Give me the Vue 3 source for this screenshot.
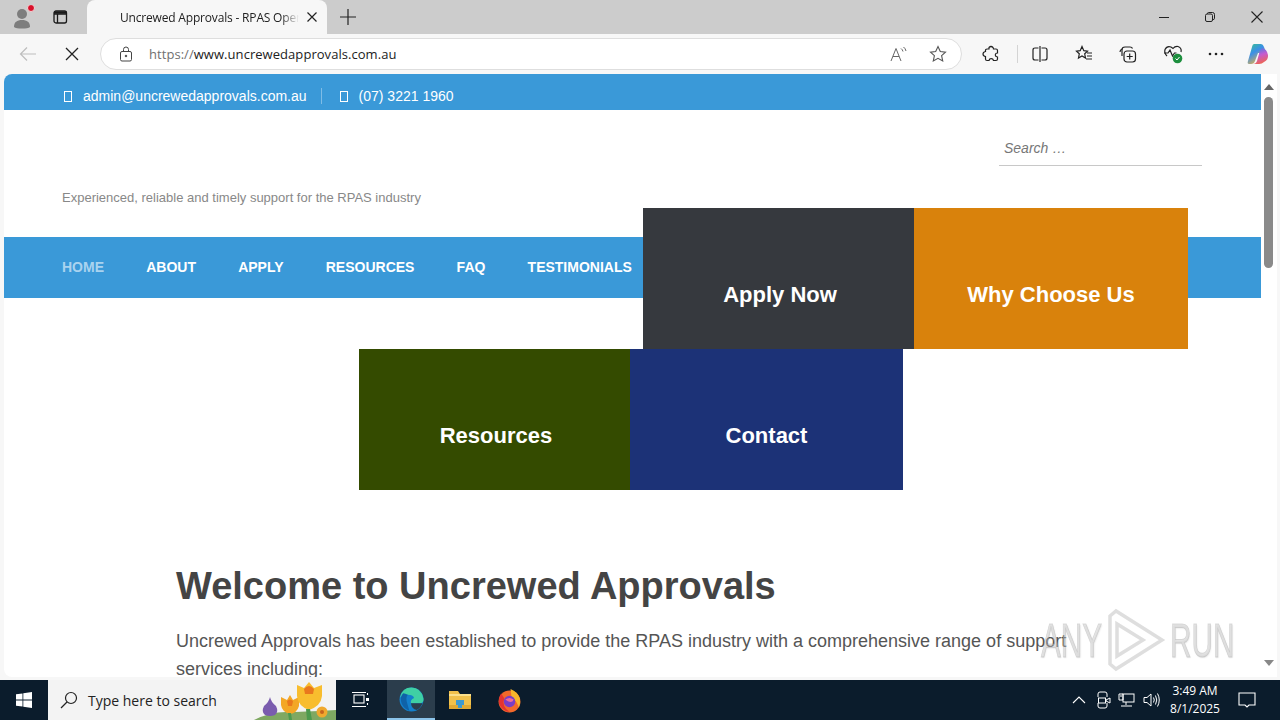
<template>
  <div class="screen">
    <div class="tabbar">
      <div class="profile">
        <svg width="24" height="24" viewBox="0 0 24 24">
          <circle cx="10" cy="9" r="5" fill="#7d7d7d" />
          <path d="M2 22c0-5 3-7 8-7s8 2 8 7c-2 2-14 2-16 0z" fill="#7d7d7d" />
          <circle cx="19" cy="3" r="3.5" fill="#d8102a" stroke="#f3d6d6" stroke-width="1" />
        </svg>
      </div>
      <div class="tab-action">
        <svg width="16" height="16" viewBox="0 0 16 16" fill="none" stroke="#1a1a1a" stroke-width="1.3">
          <rect x="2" y="2" width="12.5" height="12" rx="2" />
          <path d="M2 5h12.5M5.5 5v9" />
          <path d="M2 3.5h12.5" stroke-width="2.4" />
        </svg>
      </div>
      <div class="tab">
        <span class="tab-title">Uncrewed Approvals - RPAS Oper</span>
        <svg class="tab-close" width="12" height="12" viewBox="0 0 12 12" stroke="#222" stroke-width="1.2">
          <path d="M1.5 1.5l9 9M10.5 1.5l-9 9" />
        </svg>
      </div>
      <div class="new-tab">
        <svg width="16" height="16" viewBox="0 0 16 16" stroke="#222" stroke-width="1.2">
          <path d="M8 0v16M0 8h16" />
        </svg>
      </div>
      <div class="window-buttons">
        <svg width="12" height="12" viewBox="0 0 12 12" stroke="#222" stroke-width="1">
          <path d="M1 6.500h10" />
        </svg>
        <svg width="12" height="12" viewBox="0 0 12 12" fill="none" stroke="#222" stroke-width="1">
          <rect x="1.500" y="3" width="7" height="7.500" rx="1.500" />
          <path d="M3.500 3V2.500q0-1 1-1h4q2 0 2 2v4q0 1-1.500 1" />
        </svg>
        <svg width="14" height="14" viewBox="0 0 14 14" stroke="#222" stroke-width="1.100">
          <path d="M1.500 1.500l11 11M12.500 1.500l-11 11" />
        </svg>
      </div>
    </div>

    <div class="toolbar">
      <svg class="back" width="18" height="16" viewBox="0 0 18 16" fill="none" stroke="#bdbdbd" stroke-width="1.200">
        <path d="M17 8H1.500M8 1.500L1.500 8 8 14.500" />
      </svg>
      <svg class="stop" width="14" height="14" viewBox="0 0 14 14" stroke="#222" stroke-width="1.300">
        <path d="M1 1l12 12M13 1L1 13" />
      </svg>
      <div class="address">
        <svg class="lock" width="14" height="16" viewBox="0 0 14 16" fill="none" stroke="#444" stroke-width="1">
          <rect x="1.500" y="5.500" width="11" height="9.500" rx="1.500" />
          <path d="M4.500 5.500V3.500a2.500 2.500 0 0 1 5 0v2" />
          <circle cx="7" cy="10" r="0.800" fill="#444" />
        </svg>
        <span class="url"><span class="url-scheme">https://</span>www.uncrewedapprovals.com.au</span>
        <svg class="read" width="18" height="16" viewBox="0 0 18 16" fill="none" stroke="#666" stroke-width="1">
          <path d="M1 15L6 2.500 11 15M3 10.500h6" />
          <path d="M11 2.500q1.500 1 2 3M13.500 1q2 1.500 2.500 4" />
        </svg>
        <svg class="fav" width="18" height="18" viewBox="0 0 18 18" fill="none" stroke="#555" stroke-width="1.100">
          <path d="M9 1.500l2.300 5 5.200.6-3.900 3.600 1.100 5.300L9 13.300 4.300 16l1.100-5.300L1.500 7.100l5.200-.6z" />
        </svg>
      </div>
      <div class="tools">
        <svg class="tool-ext" width="18" height="18" viewBox="0 0 18 18" fill="none" stroke="#222" stroke-width="1.200">
          <path d="M7 2.500q2-2 4 0 .5 1 .5 1.500h2.500q1.500 0 1.500 1.500V8q-2 0-2.200 1.800T15.500 12v2q0 1.500-1.500 1.500h-2.500q-.5-1.800-2.300-1.800T7 15.500H5Q3.500 15.500 3.500 14v-2.500Q1 11 1 9t2.500-2.500V5Q3.500 4 5 4h2z" />
        </svg>
        <span class="tool-divider"></span>
        <svg class="tool-split" width="16" height="16" viewBox="0 0 16 16" fill="none" stroke="#222" stroke-width="1.200">
          <path d="M6.500 2H3q-2 0-2 2v8q0 2 2 2h3.500M9.500 2H13q2 0 2 2v8q0 2-2 2H9.500M8 0v16" />
        </svg>
        <svg class="tool-favs" width="18" height="18" viewBox="0 0 18 18" fill="none" stroke="#222" stroke-width="1.200">
          <path d="M7 1.500l1.800 4.200 3.700.4-2.800 2.700.8 4.200L7 10.900 3.500 13l.8-4.200L1.500 6.100l3.700-.4zM12 8h5M12 11h5M11 14h6" />
        </svg>
        <svg class="tool-coll" width="18" height="18" viewBox="0 0 18 18" fill="none" stroke="#222" stroke-width="1.200">
          <path d="M3 11V5q0-3 3-3h5q2 0 2.500 1.500" />
          <path d="M1 7q0-2 2-3" />
          <rect x="5" y="6" width="11.500" height="11" rx="3" />
          <path d="M10.700 8.500v6M7.700 11.500h6" />
        </svg>
        <svg class="tool-health" width="20" height="20" viewBox="0 0 20 20" fill="none" stroke="#222" stroke-width="1.200">
          <path d="M4 12Q1 9 2 5.500 4 1.500 8 3l2 1.500Q12 2 15 2.500 19 4 18 8" />
          <path d="M1 9h4l2-3 2.500 6 2-3h2" />
          <circle cx="14.500" cy="14.500" r="4.800" fill="#1d8f3e" stroke="none" />
          <path d="M12.500 14.500l1.500 1.500 2.500-3" stroke="#fff" stroke-width="1" />
        </svg>
        <svg class="tool-more" width="18" height="6" viewBox="0 0 18 6" fill="#222">
          <circle cx="3" cy="3" r="1.300" />
          <circle cx="9" cy="3" r="1.300" />
          <circle cx="15" cy="3" r="1.300" />
        </svg>
        <svg class="tool-copilot" width="24" height="24" viewBox="0 0 24 24">
          <defs>
            <linearGradient id="copilotLeft" x1="0" y1="0" x2="0.600" y2="1">
              <stop offset="0" stop-color="#38c48a" />
              <stop offset="0.450" stop-color="#3a8fe8" />
              <stop offset="1" stop-color="#f5b53a" />
            </linearGradient>
            <linearGradient id="copilotRight" x1="0.300" y1="0" x2="0.600" y2="1">
              <stop offset="0" stop-color="#3f7fe8" />
              <stop offset="0.450" stop-color="#c65ad0" />
              <stop offset="1" stop-color="#f0654a" />
            </linearGradient>
          </defs>
          <path d="M8 2h7q2 0 3 3l3 8q-3-2-6-2h-3l-3 8q-1 3-4 3H3Q1 22 2 19l4-14q.5-3 2-3z" fill="url(#copilotLeft)" />
          <path d="M16 6q5 1 6 7 .5 5-4 7-2 2-5 2H7q3 0 4-3l2-7q1-5 3-6z" fill="url(#copilotRight)" />
        </svg>
      </div>
    </div>

    <div class="viewport">
      <div class="page">
        <div class="contact-bar">
          <span class="contact-item"><i class="tofu"></i>admin@uncrewedapprovals.com.au</span>
          <span class="contact-item contact-phone"><i class="tofu"></i>(07) 3221 1960</span>
        </div>
        <div class="masthead">
          <p class="tagline">Experienced, reliable and timely support for the RPAS industry</p>
          <div class="search">Search …</div>
        </div>
        <nav class="nav">
          <a v-for="item in navItems" :key="item" :class="{ current: item === 'HOME' }">{{ item }}</a>
        </nav>
        <div class="tiles tiles-top">
          <div v-for="tile in topTiles" :key="tile.label" class="tile" :style="{ width: tile.width + 'px', background: tile.color }">{{ tile.label }}</div>
        </div>
        <div class="tiles tiles-bottom">
          <div v-for="tile in bottomTiles" :key="tile.label" class="tile" :style="{ width: tile.width + 'px', background: tile.color }">{{ tile.label }}</div>
        </div>
        <main class="content">
          <h1>Welcome to Uncrewed Approvals</h1>
          <p>Uncrewed Approvals has been established to provide the RPAS industry with a comprehensive range of support services including:</p>
        </main>
      </div>
      <div class="scrollbar">
        <span class="arrow arrow-up"></span>
        <span class="thumb"></span>
        <span class="arrow arrow-down"></span>
      </div>
      <div class="watermark">
        <span class="mark-text">ANY</span>
        <svg class="mark-logo" width="62" height="64" viewBox="0 0 62 64" fill="none" stroke="#c4c4c4" stroke-width="3.500" opacity="0.55">
          <path d="M5 8v48l6 5 46-29L11 3z" />
          <path d="M12 16v32l26-16z" />
        </svg>
        <span class="mark-text">RUN</span>
      </div>
    </div>

    <div class="taskbar">
      <div class="start">
        <svg width="16" height="16" viewBox="0 0 16 16" fill="#fff">
          <path d="M0 2.300l6.500-.9v6.200H0zM7.300 1.300L16 0v7.600H7.300zM0 8.400h6.500v6.200L0 13.700zM7.300 8.400H16V16l-8.700-1.200z" />
        </svg>
      </div>
      <div class="task-search">
        <svg width="18" height="18" viewBox="0 0 18 18" fill="none" stroke="#222" stroke-width="1.200">
          <circle cx="11" cy="7" r="5.500" />
          <path d="M7 11l-6 6" />
        </svg>
        <span>Type here to search</span>
        <svg class="flowers" width="90" height="40" viewBox="0 0 90 40">
          <path d="M8 40q16-8 32-8t50-2v10z" fill="#7fa862" />
          <path d="M24 17q1 5 6 9 3 6-1 9-5 2-10 0-4-3-1-9 5-4 6-9z" fill="#7a5cae" />
          <path d="M35 17l6 3 3-5 3 5 6-3v9q-2 7-9 8-8-2-9-9z" fill="#f3a726" />
          <path d="M41 21q3-3 6 0l-1 5h-4z" fill="#e9781d" />
          <path d="M51 5l7 3 5-6 5 6 8-3v11q-1 10-13 14-11-4-12-14z" fill="#f8bd2e" />
          <path d="M58 9q5-6 10 0l-1 5h-8z" fill="#e9781d" />
          <path d="M60 29h4l2 11h-5z" fill="#4d9a4e" />
          <path d="M42 33h3l1 7h-3z" fill="#4d9a4e" />
          <circle cx="76" cy="32" r="5.500" fill="#f0a92e" />
          <circle cx="76" cy="32" r="2" fill="#c8641c" />
        </svg>
      </div>
      <div class="task-icon">
        <svg width="18" height="16" viewBox="0 0 18 16" fill="none" stroke="#fff" stroke-width="1.100">
          <rect x="3" y="3" width="10" height="8" />
          <path d="M1 .5h14M1 14.500h14" />
          <path d="M16.500 1v2M16.500 11v2" />
          <rect x="15" y="6" width="3" height="3" fill="#fff" stroke="none" />
        </svg>
      </div>
      <div class="task-icon task-active">
        <svg width="25" height="25" viewBox="0 0 24 24">
          <circle cx="12" cy="12" r="11.500" fill="#1480cc" />
          <path d="M1 10Q3 .5 12 .5 21 .5 23.500 11q.5 4-3 4.500h-9q-1-3 3-5-1-3-6-3Q3 8 1 10z" fill="#3fd0a4" />
          <path d="M11.500 15.500h11Q21 20 17 22q-5-1-5.500-6.500z" fill="#2b3d4c" />
          <path d="M4 6Q1 9 2 14q1 6 8 9l-2-7Q6 10 8.500 7.500 6 6 4 6z" fill="#0f62a8" />
        </svg>
      </div>
      <div class="task-icon">
        <svg width="24" height="22" viewBox="0 0 24 22">
          <path d="M1 2h9l2 3h11v15H1z" fill="#f1c14c" />
          <rect x="1" y="5" width="22" height="2" fill="#fbe08c" />
          <rect x="8" y="11" width="8" height="5" fill="#3d9ad1" />
          <rect x="1" y="16" width="22" height="4" fill="#e0a934" />
          <rect x="10" y="16" width="4" height="3" fill="#3d9ad1" />
        </svg>
      </div>
      <div class="task-icon">
        <svg width="25" height="25" viewBox="0 0 24 24">
          <circle cx="12" cy="13" r="10.500" fill="#f2692a" />
          <path d="M13 1q7 3 9 9 1 5-1 9-2-7-7-10z" fill="#f8b52b" />
          <path d="M4 5q-3 5-2 10 3 7 10 8-8-6-5-13z" fill="#e5332f" />
          <circle cx="12" cy="13" r="5.500" fill="#7a3ec4" />
          <path d="M8 11q4-3 8 0-2 5-8 0z" fill="#f06a9a" />
        </svg>
      </div>
      <div class="tray">
        <svg class="tray-chevron" width="14" height="8" viewBox="0 0 14 8" fill="none" stroke="#fff" stroke-width="1.100">
          <path d="M1 7l6-6 6 6" />
        </svg>
        <svg class="tray-meet" width="16" height="18" viewBox="0 0 16 18" fill="none" stroke="#fff" stroke-width="1">
          <path d="M2 6V3q0-2 2-2h5q2 0 2 2v3M2 12v3q0 2 2 2h5q2 0 2-2v-3" />
          <rect x="2.500" y="7" width="7" height="5" />
          <path d="M10 9l4-2v5l-4-2z" />
        </svg>
        <svg width="17" height="14" viewBox="0 0 17 14" fill="none" stroke="#fff" stroke-width="1">
          <rect x="5" y="1" width="11" height="8" />
          <path d="M1 1h4v6H1zM2 3h2M8 9v3M3 13h11" />
        </svg>
        <svg width="17" height="16" viewBox="0 0 17 16" fill="none" stroke="#fff" stroke-width="1">
          <path d="M1 5.500h3L8 2v12l-4-3.500H1z" />
          <path d="M10.500 5.500q1.500 2.500 0 5M12.500 3.500q2.500 4.500 0 9M14.500 1.500q3.500 6.500 0 13" />
        </svg>
        <div class="clock">
          <span>3:49 AM</span>
          <span>8/1/2025</span>
        </div>
        <svg class="notify" width="18" height="16" viewBox="0 0 18 16" fill="none" stroke="#fff" stroke-width="1.100">
          <path d="M1 1h16v12h-6l-2 2-2-2H1z" />
        </svg>
      </div>
    </div>
  </div>
</template>

<script setup>
const navItems = ['HOME', 'ABOUT', 'APPLY', 'RESOURCES', 'FAQ', 'TESTIMONIALS']

const topTiles = [
  { label: 'Apply Now', width: 271, color: '#36393e' },
  { label: 'Why Choose Us', width: 274, color: '#d9820c' }
]

const bottomTiles = [
  { label: 'Resources', width: 271, color: '#344b00' },
  { label: 'Contact', width: 273, color: '#1c3277' }
]
</script>

<style>
html,
body {
  margin: 0;
  overflow: hidden;
}
</style>

<style scoped>
.screen {
  width: 1280px;
  height: 720px;
  display: flex;
  flex-direction: column;
  overflow: hidden;
  background: #f7f7f7;
  font-family: "Liberation Sans", Arial, sans-serif;
}

.tabbar {
  height: 34px;
  flex: none;
  display: flex;
  align-items: center;
  background: #cccccc;
}

.profile {
  width: 24px;
  height: 24px;
  margin-left: 12px;
}

.tab-action {
  width: 16px;
  height: 16px;
  margin-left: 16px;
}

.tab {
  width: 240px;
  height: 34px;
  margin-left: 19px;
  box-sizing: border-box;
  padding-left: 33px;
  display: flex;
  align-items: center;
  background: #f7f7f7;
  border-radius: 8px 8px 0 0;
  font-family: "Open Sans", sans-serif;
  font-size: 12px;
  letter-spacing: -0.18px;
  color: #222;
}

.tab-title {
  width: 179px;
  flex: none;
  white-space: nowrap;
  overflow: hidden;
  -webkit-mask-image: linear-gradient(to right, #000 90%, transparent);
  mask-image: linear-gradient(to right, #000 90%, transparent);
}

.tab-close {
  margin-left: 7px;
}

.new-tab {
  width: 16px;
  height: 16px;
  margin-left: 13px;
}

.window-buttons {
  margin-left: auto;
  width: 122px;
  display: flex;
  align-items: center;
  gap: 34px;
}

.toolbar {
  height: 40px;
  flex: none;
  display: flex;
  align-items: center;
  background: #f7f7f7;
}

.back {
  flex: none;
  margin-left: 19px;
}

.stop {
  flex: none;
  margin-left: 28px;
}

.address {
  width: 862px;
  height: 32px;
  flex: none;
  margin-left: 21px;
  box-sizing: border-box;
  padding: 0 14px 0 18px;
  display: flex;
  align-items: center;
  background: #fff;
  border: 1px solid #dedede;
  border-radius: 16px;
}

.url {
  margin-left: 16px;
  flex: 1;
  font-family: "Open Sans", sans-serif;
  font-size: 13px;
  letter-spacing: 0.05px;
  color: #222;
}

.url-scheme {
  color: #707070;
}

.fav {
  margin-left: 21px;
}

.tools {
  display: flex;
  align-items: center;
}

.tool-ext {
  margin-left: 20px;
}

.tool-divider {
  width: 1px;
  height: 18px;
  margin-left: 17px;
  background: #d4d4d4;
}

.tool-split {
  margin-left: 14px;
}

.tool-favs {
  margin-left: 27px;
}

.tool-coll {
  margin-left: 26px;
}

.tool-health {
  margin-left: 26px;
}

.tool-more {
  margin-left: 24px;
}

.tool-copilot {
  margin-left: 21px;
}

.viewport {
  position: relative;
  height: 606px;
  flex: none;
  display: flex;
  padding-left: 4px;
}

.page {
  width: 1257px;
  height: 603px;
  overflow: hidden;
  background: #fff;
  border-radius: 8px 0 0 8px;
}

.contact-bar {
  height: 36px;
  box-sizing: border-box;
  padding: 8px 0 0 59px;
  display: flex;
  align-items: center;
  background: #3a99d8;
  font-size: 14px;
  color: #fff;
}

.contact-item {
  display: flex;
  align-items: center;
}

.contact-phone {
  margin-left: 14px;
  padding-left: 17px;
  border-left: 1px solid #7fbce6;
}

.tofu {
  width: 6px;
  height: 9px;
  margin: 0 11px 0 1px;
  border: 1px solid #fff;
}

.masthead {
  height: 127px;
  display: flex;
  justify-content: space-between;
  padding: 0 59px 0 58px;
}

.tagline {
  margin: 80px 0 0;
  font-size: 13px;
  line-height: 15px;
  color: #888;
}

.search {
  width: 203px;
  height: 37px;
  margin-top: 19px;
  box-sizing: border-box;
  padding: 11px 5px 0;
  border-bottom: 1px solid #c8c8c8;
  font-size: 14px;
  font-style: italic;
  color: #777;
}

.nav {
  height: 61px;
  box-sizing: border-box;
  padding: 0 0 2px 58px;
  display: flex;
  align-items: center;
  gap: 42.2px;
  background: #3a99d8;
  font-size: 14px;
  font-weight: 700;
  color: #fff;
}

.current {
  color: #a9d3ef;
}

.tiles {
  display: flex;
  position: relative;
}

.tiles-top {
  margin: -90px 0 0 639px;
}

.tiles-bottom {
  margin-left: 355px;
}

.tile {
  height: 141px;
  box-sizing: border-box;
  padding-top: 74px;
  text-align: center;
  font-size: 22px;
  font-weight: 700;
  color: #fff;
}

.tile:first-child {
  padding-left: 3px;
}

.content {
  padding: 72px 0 0 172px;
  width: 900px;
}

.content h1 {
  margin: 0;
  font-size: 38px;
  line-height: 48px;
  color: #444;
}

.content p {
  margin: 17px 0 0;
  font-size: 18px;
  line-height: 28px;
  color: #555;
}

.scrollbar {
  width: 16px;
  height: 603px;
  position: relative;
  background: #fff;
}

.thumb {
  position: absolute;
  left: 3px;
  top: 23px;
  width: 9px;
  height: 171px;
  border-radius: 5px;
  background: #8a8a8a;
}

.arrow {
  position: absolute;
  left: 3px;
  border-left: 5px solid transparent;
  border-right: 5px solid transparent;
}

.arrow-up {
  top: 10px;
  border-bottom: 6px solid #666;
}

.arrow-down {
  bottom: 11px;
  border-top: 6px solid #888;
}

.watermark {
  position: absolute;
  left: 1041px;
  top: 534px;
  display: flex;
  align-items: center;
  font-size: 48px;
  color: rgba(205, 205, 205, 0.4);
  -webkit-text-stroke: 1px rgba(170, 170, 170, 0.4);
  text-shadow: 1px 1px 2px rgba(0, 0, 0, 0.1);
}

.mark-text {
  width: 64px;
  transform: scaleX(0.62);
  transform-origin: left center;
}

.mark-logo {
  margin-right: 3px;
}

.taskbar {
  height: 40px;
  flex: none;
  display: flex;
  align-items: center;
  background: #0b1c2c;
}

.start {
  width: 48px;
  height: 40px;
  display: flex;
  align-items: center;
  justify-content: center;
}

.task-search {
  width: 288px;
  height: 40px;
  box-sizing: border-box;
  padding-left: 12px;
  position: relative;
  overflow: hidden;
  display: flex;
  align-items: center;
  gap: 10px;
  background: #f3f3f3;
  font-family: "Open Sans", sans-serif;
  font-size: 14px;
  color: #222;
}

.flowers {
  position: absolute;
  right: 0;
  top: 0;
}

.task-icon {
  width: 48px;
  height: 40px;
  margin-left: 1px;
  box-sizing: border-box;
  display: flex;
  align-items: center;
  justify-content: center;
}

.task-search + .task-icon {
  margin-left: 0;
}

.task-active {
  margin-left: 3px;
  background: #2b3d4c;
  border-bottom: 2px solid #8cc4ea;
}

.tray {
  margin-left: auto;
  display: flex;
  align-items: center;
  gap: 8px;
  padding-right: 24px;
}

.tray-chevron {
  margin-right: 2px;
}

.tray-meet {
  margin-right: -2px;
}

.clock {
  width: 64px;
  margin-left: -5px;
  display: flex;
  flex-direction: column;
  align-items: center;
  font-family: "Open Sans", sans-serif;
  font-size: 12px;
  line-height: 18px;
  color: #fff;
}

.notify {
  margin-left: 3px;
}
</style>
